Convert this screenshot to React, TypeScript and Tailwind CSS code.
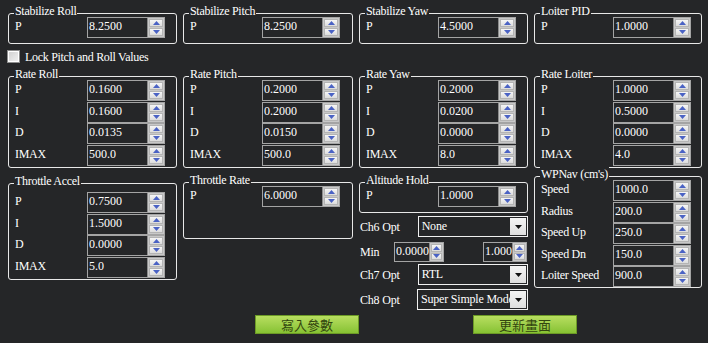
import React from 'react';

const bg = 'bg-[#252628]';

function Arrow({ up, color = '#4a62c4' }: { up?: boolean; color?: string }) {
  return (
    <svg width="7" height="4" viewBox="0 0 7 4" className="block">
      <polygon points={up ? '3.5,0 7,4 0,4' : '0,0 7,0 3.5,4'} fill={color} />
    </svg>
  );
}

function SpinButtons({ width = 16 }: { width?: number }) {
  const btn =
    'flex-1 flex items-center justify-center border border-[#b4b4b4] bg-gradient-to-b from-[#f6f6f6] to-[#dcdcdc]';
  return (
    <div
      className="flex flex-col gap-px py-px pr-px pl-px bg-[#c8c8c8] border-l border-[#8c8c8c]"
      style={{ width }}
    >
      <div className={btn}>
        <Arrow up />
      </div>
      <div className={btn}>
        <Arrow />
      </div>
    </div>
  );
}

function NumBox({ value }: { value: string }) {
  return (
    <div className="flex h-[21px] w-[78px] border border-[#a4a4a4] bg-[#252628]">
      <div className="flex-1 overflow-hidden whitespace-nowrap pl-px pt-px leading-[14px]">{value}</div>
      <SpinButtons width={17} />
    </div>
  );
}

function Field({ label, value }: { label: string; value: string }) {
  return (
    <div className="grid grid-cols-[72px_78px] h-[21px]">
      <span className="pt-[2px] leading-[14px] tracking-[-0.3px] whitespace-nowrap">{label}</span>
      <NumBox value={value} />
    </div>
  );
}

function Group({
  title,
  className = '',
  children,
}: {
  title: string;
  className?: string;
  children: React.ReactNode;
}) {
  return (
    <div className={`relative border border-[#e8e8e8] rounded-[3px] px-[6px] ${className}`}>
      <span
        className={`absolute -top-[10px] left-[5px] px-px leading-[14px] tracking-[-0.3px] whitespace-nowrap ${bg}`}
      >
        {title}
      </span>
      {children}
    </div>
  );
}

function Rows({ rows, className = '' }: { rows: [string, string][]; className?: string }) {
  return (
    <div className={`flex flex-col gap-[0.5px] ${className}`}>
      {rows.map(([l, v]) => (
        <Field key={l} label={l} value={v} />
      ))}
    </div>
  );
}

function Combo({ value }: { value: string }) {
  return (
    <div className="flex h-[21px] w-[111px] border border-[#f0f0f0] bg-[#252628]">
      <div className="flex-1 overflow-hidden whitespace-nowrap pl-[3px] leading-[19px] tracking-[-0.2px]">
        {value}
      </div>
      <div className="w-[16px] my-px mr-px flex items-center justify-center bg-gradient-to-b from-[#f4f4f4] to-[#dedede]">
        <Arrow color="#111" />
      </div>
    </div>
  );
}

function SmallSpin({ value, w }: { value: string; w: number }) {
  return (
    <div className="flex h-[20px] border border-[#a4a4a4] bg-[#252628]" style={{ width: w }}>
      <div className="flex-1 overflow-hidden whitespace-nowrap pl-px leading-[17px]">{value}</div>
      <SpinButtons width={14} />
    </div>
  );
}

function GreenButton({ label }: { label: string }) {
  return (
    <button className="h-[19px] w-[104px] border border-[#6c9a26] bg-gradient-to-b from-[#b8de60] to-[#86c232] text-[#33460f] text-[13px] leading-[16px] font-['Noto_Sans_CJK_TC',sans-serif]">
      {label}
    </button>
  );
}

export default function App() {
  return (
    <div
      className={`w-[708px] h-[343px] overflow-hidden ${bg} text-white text-[12px] pl-[8px] pt-[13px] font-['Liberation_Serif','Noto_Sans_CJK_TC',serif]`}
    >
      <div className="grid grid-cols-[169px_170px_169px_168px] gap-x-[6px]">
        <Group title="Stabilize Roll" className="pt-[3px] pb-[5px]">
          <Field label="P" value="8.2500" />
        </Group>
        <Group title="Stabilize Pitch" className="pt-[3px] pb-[5px]">
          <Field label="P" value="8.2500" />
        </Group>
        <Group title="Stabilize Yaw" className="pt-[3px] pb-[5px]">
          <Field label="P" value="4.5000" />
        </Group>
        <Group title="Loiter PID" className="pt-[3px] pb-[5px]">
          <Field label="P" value="1.0000" />
        </Group>
      </div>

      <label className="mt-[6px] -ml-px flex h-[13px] items-center gap-[5px]">
        <span className="h-[13px] w-[13px] border border-[#8e8e8e] bg-gradient-to-br from-[#cfcfcf] to-[#f2f2f2] shadow-[inset_0_0_0_1px_#ffffff]" />
        <span className="leading-[14px] tracking-[-0.3px]">Lock Pitch and Roll Values</span>
      </label>

      <div className="mt-[13px] grid grid-cols-[169px_170px_169px_168px] gap-x-[6px]">
        <Group title="Rate Roll" className="pt-[3px] pb-[1.5px]">
          <Rows rows={[['P', '0.1600'], ['I', '0.1600'], ['D', '0.0135'], ['IMAX', '500.0']]} />
        </Group>
        <Group title="Rate Pitch" className="pt-[3px] pb-[1.5px]">
          <Rows rows={[['P', '0.2000'], ['I', '0.2000'], ['D', '0.0150'], ['IMAX', '500.0']]} />
        </Group>
        <Group title="Rate Yaw" className="pt-[3px] pb-[1.5px]">
          <Rows rows={[['P', '0.2000'], ['I', '0.0200'], ['D', '0.0000'], ['IMAX', '8.0']]} />
        </Group>
        <Group title="Rate Loiter" className="pt-[3px] pb-[1.5px]">
          <Rows rows={[['P', '1.0000'], ['I', '0.5000'], ['D', '0.0000'], ['IMAX', '4.0']]} />
        </Group>
      </div>

      <div className="mt-[8px] grid grid-cols-[169px_170px_169px_168px] gap-x-[6px] items-start">
        <Group title="Throttle Accel" className="mt-[7px] pt-[8px] pb-[1.5px]">
          <Rows rows={[['P', '0.7500'], ['I', '1.5000'], ['D', '0.0000'], ['IMAX', '5.0']]} />
        </Group>

        <Group title="Throttle Rate" className="mt-[6px] h-[57px] pt-[3px]">
          <Field label="P" value="6.0000" />
        </Group>

        <div className="mt-[6px] flex flex-col">
          <Group title="Altitude Hold" className="pt-[3px] pb-[5px]">
            <Field label="P" value="1.0000" />
          </Group>
          <div className="mt-[3px] flex items-center pl-px">
            <span className="w-[58px] tracking-[-0.2px]">Ch6 Opt</span>
            <Combo value="None" />
          </div>
          <div className="mt-[5px] flex items-center pl-px">
            <span className="w-[34px] tracking-[-0.2px]">Min</span>
            <SmallSpin value="0.0000" w={50} />
            <span className="w-[39px]" />
            <SmallSpin value="1.0000" w={44} />
          </div>
          <div className="mt-[2px] flex items-center pl-px">
            <span className="w-[58px] tracking-[-0.2px]">Ch7 Opt</span>
            <Combo value="RTL" />
          </div>
          <div className="mt-[4px] flex items-center pl-px">
            <span className="w-[58px] tracking-[-0.2px]">Ch8 Opt</span>
            <Combo value="Super Simple Mode" />
          </div>
        </div>

        <Group title="WPNav (cm's)" className="pt-[3px]">
          <Rows
            rows={[
              ['Speed', '1000.0'],
              ['Radius', '200.0'],
              ['Speed Up', '250.0'],
              ['Speed Dn', '150.0'],
              ['Loiter Speed', '900.0'],
            ]}
          />
        </Group>
      </div>

      <div className="mt-[5px] ml-[247px] flex gap-[114px]">
        <GreenButton label="寫入參數" />
        <GreenButton label="更新畫面" />
      </div>
    </div>
  );
}
